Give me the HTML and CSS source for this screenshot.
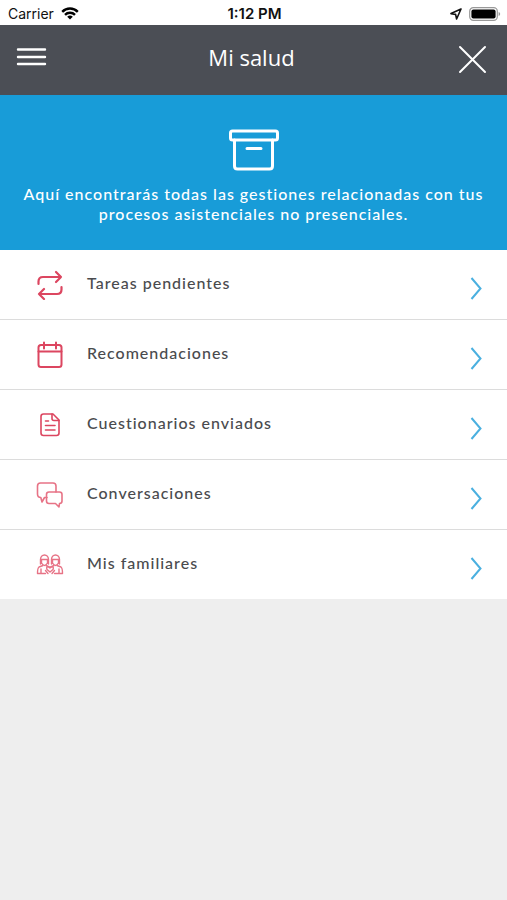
FILE: index.html
```
<!DOCTYPE html>
<html lang="es">
<head>
  <meta charset="UTF-8">
  <meta name="viewport" content="width=device-width, initial-scale=1">
  <title>Mi salud</title>
  <link rel="stylesheet" href="styles.css">
</head>
<body>
  <div class="status-bar">
    <div class="carrier">
      <span>Carrier</span>
      <svg width="18" height="13" viewBox="0 0 18 13" fill="none" stroke="#000" stroke-width="2.4">
        <path d="M1.2 4.8a11 11 0 0 1 15.6 0"/>
        <path d="M4 7.8a7 7 0 0 1 10 0"/>
        <path d="M9 12.6L6.2 9.8a4 4 0 0 1 5.6 0z" fill="#000" stroke="none"/>
      </svg>
    </div>
    <span class="time">1:12 PM</span>
    <div class="battery">
      <svg width="12" height="12" viewBox="0 0 12 12" fill="none" stroke="#111" stroke-width="1.6" stroke-linejoin="round">
        <path d="M11 1L1 5.6l4.6.8L6.6 11z"/>
      </svg>
      <svg width="32" height="14" viewBox="0 0 32 14">
        <rect x="0.7" y="0.7" width="27.6" height="12.6" rx="3.6" fill="#fff" stroke="#999" stroke-width="1.2"/>
        <rect x="2.4" y="2.4" width="24.2" height="9.2" rx="2" fill="#000"/>
        <path d="M29.6 5v4q1.6-.6 1.6-2t-1.6-2z" fill="#999"/>
      </svg>
    </div>
  </div>

  <header class="navbar">
    <button class="nav-button" type="button" aria-label="Menú">
      <svg width="30" height="30" viewBox="0 0 30 30" stroke="#fff" stroke-width="2.4" stroke-linecap="round">
        <path d="M2 7.5h27M2 15h27M2 22h27"/>
      </svg>
    </button>
    <h1>Mi salud</h1>
    <button class="nav-button" type="button" aria-label="Cerrar">
      <svg width="30" height="30" viewBox="0 0 30 30" stroke="#fff" stroke-width="2" stroke-linecap="round">
        <path d="M3 5l25 25M28 5L3 30"/>
      </svg>
    </button>
  </header>

  <section class="intro">
    <svg width="50" height="42" viewBox="0 0 50 42" fill="none" stroke="#fff" stroke-width="3" stroke-linecap="round" stroke-linejoin="round">
      <rect x="1.5" y="2" width="47" height="9" rx="2"/>
      <path d="M5.5 11v26q0 3 3 3h32q3 0 3-3V11M18 19.5h14"/>
    </svg>
    <p>Aquí encontrarás todas las gestiones relacionadas con tus procesos asistenciales no presenciales.</p>
  </section>

  <nav>
    <ul class="menu">
      <li>
        <a href="#tareas">
          <svg class="icon" viewBox="0 0 30 30" stroke-width="2.2">
            <path d="M3.5 14v-2.5Q3.500 7 8 7h18M21 2l5 5-5 5"/>
            <path d="M26.5 17v2.5q0 4.500-4.500 4.500H4M9 19l-5 5 5 5"/>
          </svg>
          <span>Tareas pendientes</span>
          <svg class="chevron" viewBox="0 0 12 24"><path d="M1.500 2l9 10.500-9 10.500"/></svg>
        </a>
      </li>
      <li>
        <a href="#recomendaciones">
          <svg class="icon" viewBox="0 0 30 30" stroke-width="2">
            <rect x="3.5" y="5" width="23" height="22" rx="2.5"/>
            <path d="M3.500 11.500h23M9 2.500v6M21 2.500v6"/>
          </svg>
          <span>Recomendaciones</span>
          <svg class="chevron" viewBox="0 0 12 24"><path d="M1.500 2l9 10.500-9 10.500"/></svg>
        </a>
      </li>
      <li>
        <a href="#cuestionarios">
          <svg class="icon" viewBox="0 0 30 30" stroke-width="1.6">
            <path d="M8.500 4H18l6 6v13q0 2.500-2.500 2.500h-13Q6 25.500 6 23V6.500Q6 4 8.500 4z"/>
            <path d="M17 4v4.500q0 2 2 2h5M10.500 11h3M10.500 15.500h9.500M10.500 20h9.500"/>
          </svg>
          <span>Cuestionarios enviados</span>
          <svg class="chevron" viewBox="0 0 12 24"><path d="M1.500 2l9 10.500-9 10.500"/></svg>
        </a>
      </li>
      <li>
        <a href="#conversaciones">
          <svg class="icon light" viewBox="0 0 30 30" stroke-width="1.6">
            <path d="M12 17.500H9.500L7 22l-1.200-4.500Q2.500 17.500 2.500 14V6Q2.500 3 5.500 3H18q3 0 3 3v6"/>
            <path d="M14 12h10.500q2.500 0 2.500 2.500V21q0 2.500-2.500 2.500L24 27l-3.500-3.500H14q-2.500 0-2.500-2.500v-6.500Q11.500 12 14 12z"/>
          </svg>
          <span>Conversaciones</span>
          <svg class="chevron" viewBox="0 0 12 24"><path d="M1.500 2l9 10.500-9 10.500"/></svg>
        </a>
      </li>
      <li>
        <a href="#familiares">
          <svg class="icon light" viewBox="0 0 30 30" stroke-width="1.4">
            <path d="M5.500 14V9.500a4 4.500 0 0 1 8 0V14M5.500 9.500h8M6.500 10v3q3 5 6 0v-3"/>
            <path d="M16.500 14V9.500a4 4.500 0 0 1 8 0V14M16.500 9.500h8M17.500 10v3q3 5 6 0v-3"/>
            <path d="M8 15.500l-4 1.500q-1.500 1-1.500 6.500h8M11 15.500l3 1.500M6 19v4M22 15.500l4 1.500q1.500 1 1.500 6.500h-8M19 15.500L16 17M24 19v4"/>
            <path d="M15 22l-3-2.500q-1-2.500 1-3 1.500 0 2 1.500.500-1.500 2-1.500 2 .500 1 3zM10.500 20.500l2.500 3M19.500 20.500l-2.500 3"/>
          </svg>
          <span>Mis familiares</span>
          <svg class="chevron" viewBox="0 0 12 24"><path d="M1.500 2l9 10.500-9 10.500"/></svg>
        </a>
      </li>
    </ul>
  </nav>
</body>
</html>
```
FILE: styles.css
```
body {
  margin: 0;
  background-color: #eee;
  font-family: Lato, "Open Sans", sans-serif;
  color: #4a4b4e;
}
svg {
  display: block;
  flex: none;
}
.status-bar {
  display: grid;
  grid-template-columns: 1fr auto 1fr;
  align-items: center;
  height: 25px;
  padding: 2px 6px 0 8px;
  box-sizing: border-box;
  background-color: #fff;
  color: #111;
  font-family: Inter, sans-serif;
  font-size: 14px;
}
.carrier,
.battery {
  display: flex;
  align-items: center;
  gap: 7px;
}
.battery {
  justify-content: flex-end;
}
.time {
  font-size: 15px;
  font-weight: 600;
}
.navbar {
  display: flex;
  align-items: center;
  justify-content: space-between;
  height: 70px;
  padding: 0 20px 6px 16px;
  box-sizing: border-box;
  background-color: #4b4e55;
  color: #fff;
}
.navbar h1 {
  margin: 0;
  font-family: "Open Sans", sans-serif;
  font-size: 22px;
  font-weight: 400;
}
.nav-button {
  padding: 0;
  border: none;
  background: none;
  cursor: pointer;
}
.nav-button svg {
  overflow: visible;
}
.intro {
  display: flex;
  flex-direction: column;
  align-items: center;
  gap: 13px;
  padding: 34px 16px 26px;
  background-color: #189cd8;
  color: #fff;
}
.intro p {
  margin: 0;
  font-size: 16px;
  font-weight: 500;
  line-height: 20px;
  letter-spacing: 1px;
  text-align: center;
}
.menu {
  margin: 0;
  padding: 0;
  list-style: none;
  background-color: #fff;
}
.menu li + li {
  border-top: 1px solid #dcdcdc;
}
.menu a {
  display: flex;
  align-items: center;
  height: 69px;
  padding: 0 25px 0 35px;
  color: inherit;
  font-size: 16px;
  font-weight: 500;
  letter-spacing: 1px;
  text-decoration: none;
}
.menu span {
  flex: 1;
  padding-bottom: 4px;
}
.icon {
  width: 30px;
  height: 30px;
  margin-right: 22px;
  fill: none;
  stroke: #dc4660;
  stroke-linecap: round;
  stroke-linejoin: round;
}
.light {
  stroke: #e77386;
}
.chevron {
  width: 12px;
  height: 24px;
  margin-top: 6px;
  fill: none;
  stroke: #4ab0e0;
  stroke-width: 2;
}
```
